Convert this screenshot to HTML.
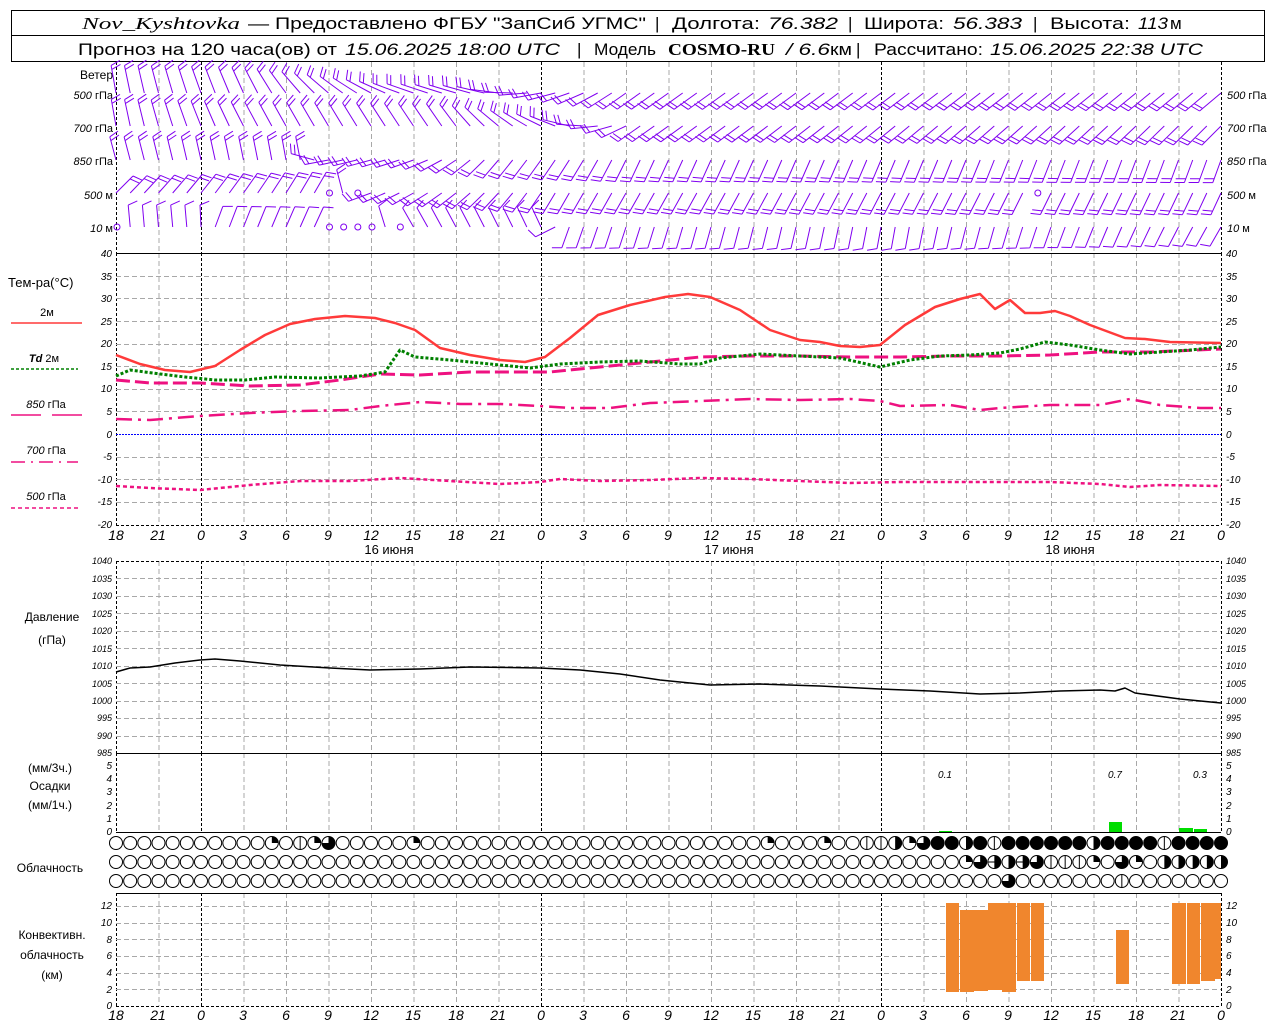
<!DOCTYPE html>
<html><head><meta charset="utf-8">
<style>
html,body{margin:0;padding:0;background:#fff;}
svg{display:block;font-family:"Liberation Sans",sans-serif;}
.it{font-style:italic;}
.lab{font-size:12px;fill:#000;}
.sc{font-size:10px;font-style:italic;fill:#000;}
.ax{font-size:14px;font-style:italic;fill:#000;}
</style></head>
<body>
<svg id="s" width="1280" height="1024" viewBox="0 0 1280 1024" xmlns="http://www.w3.org/2000/svg">
<rect width="1280" height="1024" fill="#fff"/>
<!-- header -->
<rect x="11.5" y="10.5" width="1253" height="25" fill="none" stroke="#000"/>
<rect x="11.5" y="35.5" width="1253" height="26" fill="none" stroke="#000"/>
<g font-size="17" fill="#000">
<text x="82" y="29" font-family="Liberation Serif,serif" font-style="italic" textLength="158" lengthAdjust="spacingAndGlyphs">Nov_Kyshtovka</text>
<text x="248" y="29" textLength="398" lengthAdjust="spacingAndGlyphs">— Предоставлено ФГБУ "ЗапСиб УГМС"</text>
<text x="655" y="29">|</text>
<text x="672" y="29" textLength="88" lengthAdjust="spacingAndGlyphs">Долгота:</text>
<text x="768" y="29" class="it" textLength="70" lengthAdjust="spacingAndGlyphs">76.382</text>
<text x="848" y="29">|</text>
<text x="864" y="29" textLength="80" lengthAdjust="spacingAndGlyphs">Широта:</text>
<text x="953" y="29" class="it" textLength="69" lengthAdjust="spacingAndGlyphs">56.383</text>
<text x="1033" y="29">|</text>
<text x="1050" y="29" textLength="80" lengthAdjust="spacingAndGlyphs">Высота:</text>
<text x="1138" y="29" class="it" textLength="30" lengthAdjust="spacingAndGlyphs">113</text>
<text x="1170" y="29">м</text>
<text x="78" y="55" textLength="259" lengthAdjust="spacingAndGlyphs">Прогноз на 120 часа(ов) от</text>
<text x="345" y="55" class="it" textLength="215" lengthAdjust="spacingAndGlyphs">15.06.2025 18:00 UTC</text>
<text x="577" y="55">|</text>
<text x="594" y="55" textLength="62" lengthAdjust="spacingAndGlyphs">Модель</text>
<text x="668" y="55" font-family="Liberation Serif,serif" font-weight="bold" textLength="107" lengthAdjust="spacingAndGlyphs">COSMO-RU</text>
<text x="786" y="55" class="it" textLength="44" lengthAdjust="spacingAndGlyphs">/ 6.6</text>
<text x="830" y="55" textLength="22" lengthAdjust="spacingAndGlyphs">км</text>
<text x="856" y="55">|</text>
<text x="874" y="55" textLength="109" lengthAdjust="spacingAndGlyphs">Рассчитано:</text>
<text x="990" y="55" class="it" textLength="213" lengthAdjust="spacingAndGlyphs">15.06.2025 22:38 UTC</text>
</g>
<g id="grid"></g>
<!-- panel borders -->
<g stroke="#000" stroke-width="1">
<line x1="116" y1="253.5" x2="1221" y2="253.5"/>
<line x1="116" y1="525.5" x2="1221" y2="525.5" stroke-dasharray="3,2"/>
<line x1="116" y1="561.5" x2="1221" y2="561.5" stroke-dasharray="3,2"/>
<line x1="116" y1="753.5" x2="1221" y2="753.5"/>
<line x1="116" y1="832.5" x2="1221" y2="832.5"/>
<line x1="116" y1="893.5" x2="1221" y2="893.5"/>
<line x1="116" y1="1006.5" x2="1221" y2="1006.5" stroke-dasharray="3,2"/>
</g>
<line x1="116" y1="434.5" x2="1221" y2="434.5" stroke="#0000ff" stroke-dasharray="2,1"/>
<!-- left labels -->
<g class="lab">
<text x="113" y="79" text-anchor="end">Ветер</text>
<text x="113" y="99" text-anchor="end" font-size="11"><tspan class="it">500</tspan> гПа</text>
<text x="113" y="132" text-anchor="end" font-size="11"><tspan class="it">700</tspan> гПа</text>
<text x="113" y="165" text-anchor="end" font-size="11"><tspan class="it">850</tspan> гПа</text>
<text x="113" y="199" text-anchor="end" font-size="11"><tspan class="it">500</tspan> м</text>
<text x="113" y="232" text-anchor="end" font-size="11"><tspan class="it">10</tspan>   м</text>
<text x="1227" y="99" font-size="11"><tspan class="it">500</tspan> гПа</text>
<text x="1227" y="132" font-size="11"><tspan class="it">700</tspan> гПа</text>
<text x="1227" y="165" font-size="11"><tspan class="it">850</tspan> гПа</text>
<text x="1227" y="199" font-size="11"><tspan class="it">500</tspan> м</text>
<text x="1227" y="232" font-size="11"><tspan class="it">10</tspan>   м</text>
<text x="8" y="287" font-size="13">Тем-ра(°C)</text>
<text x="47" y="316" text-anchor="middle" font-size="11">2м</text>
<text x="44" y="362" text-anchor="middle" font-size="11"><tspan class="it" font-weight="bold">Td</tspan>  2м</text>
<text x="46" y="408" text-anchor="middle" font-size="11"><tspan class="it">850</tspan> гПа</text>
<text x="46" y="454" text-anchor="middle" font-size="11"><tspan class="it">700</tspan> гПа</text>
<text x="46" y="500" text-anchor="middle" font-size="11"><tspan class="it">500</tspan> гПа</text>
<text x="52" y="621" text-anchor="middle">Давление</text>
<text x="52" y="644" text-anchor="middle">(гПа)</text>
<text x="50" y="772" text-anchor="middle">(мм/3ч.)</text>
<text x="50" y="790" text-anchor="middle">Осадки</text>
<text x="50" y="809" text-anchor="middle">(мм/1ч.)</text>
<text x="50" y="872" text-anchor="middle">Облачность</text>
<text x="52" y="939" text-anchor="middle">Конвективн.</text>
<text x="52" y="959" text-anchor="middle">облачность</text>
<text x="52" y="979" text-anchor="middle">(км)</text>
</g>
<g stroke-width="1.5">
<line x1="11" y1="323" x2="82" y2="323" stroke="#ff3a3a"/>
<line x1="11" y1="369" x2="78" y2="369" stroke="#008000" stroke-dasharray="3,2"/>
<line x1="11" y1="415" x2="41" y2="415" stroke="#ee1180"/><line x1="52" y1="415" x2="82" y2="415" stroke="#ee1180"/>
<line x1="11" y1="462" x2="78" y2="462" stroke="#ee1180" stroke-dasharray="14,6,2,6"/>
<line x1="11" y1="508" x2="78" y2="508" stroke="#ee1180" stroke-dasharray="4,3"/>
</g>
<!-- temp scale -->
<g class="sc" text-anchor="end">
<text x="112" y="257">40</text><text x="112" y="280">35</text><text x="112" y="302">30</text><text x="112" y="325">25</text><text x="112" y="347">20</text><text x="112" y="370">15</text><text x="112" y="392">10</text><text x="112" y="415">5</text><text x="112" y="438">0</text><text x="112" y="460">-5</text><text x="112" y="483">-10</text><text x="112" y="505">-15</text><text x="112" y="528">-20</text>
<text x="112" y="564" font-size="9">1040</text><text x="112" y="582" font-size="9">1035</text><text x="112" y="599" font-size="9">1030</text><text x="112" y="617" font-size="9">1025</text><text x="112" y="634" font-size="9">1020</text><text x="112" y="652" font-size="9">1015</text><text x="112" y="669" font-size="9">1010</text><text x="112" y="687" font-size="9">1005</text><text x="112" y="704" font-size="9">1000</text><text x="112" y="721" font-size="9">995</text><text x="112" y="739" font-size="9">990</text><text x="112" y="756" font-size="9">985</text>
<text x="112" y="769">5</text><text x="112" y="782">4</text><text x="112" y="795">3</text><text x="112" y="809">2</text><text x="112" y="822">1</text><text x="112" y="835">0</text>
<text x="112" y="909">12</text><text x="112" y="926">10</text><text x="112" y="943">8</text><text x="112" y="959">6</text><text x="112" y="976">4</text><text x="112" y="993">2</text><text x="112" y="1009">0</text>
</g>
<g class="sc">
<text x="1226" y="257">40</text><text x="1226" y="280">35</text><text x="1226" y="302">30</text><text x="1226" y="325">25</text><text x="1226" y="347">20</text><text x="1226" y="370">15</text><text x="1226" y="392">10</text><text x="1226" y="415">5</text><text x="1226" y="438">0</text><text x="1226" y="460">-5</text><text x="1226" y="483">-10</text><text x="1226" y="505">-15</text><text x="1226" y="528">-20</text>
<text x="1226" y="564" font-size="9">1040</text><text x="1226" y="582" font-size="9">1035</text><text x="1226" y="599" font-size="9">1030</text><text x="1226" y="617" font-size="9">1025</text><text x="1226" y="634" font-size="9">1020</text><text x="1226" y="652" font-size="9">1015</text><text x="1226" y="669" font-size="9">1010</text><text x="1226" y="687" font-size="9">1005</text><text x="1226" y="704" font-size="9">1000</text><text x="1226" y="721" font-size="9">995</text><text x="1226" y="739" font-size="9">990</text><text x="1226" y="756" font-size="9">985</text>
<text x="1226" y="769">5</text><text x="1226" y="782">4</text><text x="1226" y="795">3</text><text x="1226" y="809">2</text><text x="1226" y="822">1</text><text x="1226" y="835">0</text>
<text x="1226" y="909">12</text><text x="1226" y="926">10</text><text x="1226" y="943">8</text><text x="1226" y="959">6</text><text x="1226" y="976">4</text><text x="1226" y="993">2</text><text x="1226" y="1009">0</text>
</g>
<!-- time axes -->
<g class="ax" text-anchor="middle">
<text x="116" y="540">18</text><text x="158" y="540">21</text><text x="201" y="540">0</text><text x="243" y="540">3</text><text x="286" y="540">6</text><text x="328" y="540">9</text><text x="371" y="540">12</text><text x="413" y="540">15</text><text x="456" y="540">18</text><text x="498" y="540">21</text><text x="541" y="540">0</text><text x="583" y="540">3</text><text x="626" y="540">6</text><text x="668" y="540">9</text><text x="711" y="540">12</text><text x="753" y="540">15</text><text x="796" y="540">18</text><text x="838" y="540">21</text><text x="881" y="540">0</text><text x="923" y="540">3</text><text x="966" y="540">6</text><text x="1008" y="540">9</text><text x="1051" y="540">12</text><text x="1093" y="540">15</text><text x="1136" y="540">18</text><text x="1178" y="540">21</text><text x="1221" y="540">0</text>
<text x="116" y="1020">18</text><text x="158" y="1020">21</text><text x="201" y="1020">0</text><text x="243" y="1020">3</text><text x="286" y="1020">6</text><text x="328" y="1020">9</text><text x="371" y="1020">12</text><text x="413" y="1020">15</text><text x="456" y="1020">18</text><text x="498" y="1020">21</text><text x="541" y="1020">0</text><text x="583" y="1020">3</text><text x="626" y="1020">6</text><text x="668" y="1020">9</text><text x="711" y="1020">12</text><text x="753" y="1020">15</text><text x="796" y="1020">18</text><text x="838" y="1020">21</text><text x="881" y="1020">0</text><text x="923" y="1020">3</text><text x="966" y="1020">6</text><text x="1008" y="1020">9</text><text x="1051" y="1020">12</text><text x="1093" y="1020">15</text><text x="1136" y="1020">18</text><text x="1178" y="1020">21</text><text x="1221" y="1020">0</text>
</g>
<g font-size="13" text-anchor="middle" fill="#000">
<text x="389" y="554">16 июня</text><text x="729" y="554">17 июня</text><text x="1070" y="554">18 июня</text>
</g>
<!-- temperature curves -->
<g fill="none" stroke-linejoin="round">
<polyline stroke="#ee1180" stroke-width="2.5" stroke-dasharray="4,3" points="116,486 150,488 200,490 250,485 300,481 350,481 400,478 450,481 500,484 540,482 560,479 600,481 650,480 700,478 750,479 800,481 850,483 900,482 950,482 1000,482 1050,482 1100,484 1130,487 1160,485 1221,486"/>
<polyline stroke="#ee1180" stroke-width="2.5" stroke-dasharray="16,6,3,6" points="116,419 150,420 200,416 250,413 300,411 350,410 380,406 420,402 460,404 500,404 540,406 570,408 610,408 650,403 700,401 750,399 800,400 850,399 880,401 900,406 950,405 980,410 1000,408 1050,405 1100,405 1130,399 1160,405 1200,408 1221,408"/>
<polyline stroke="#ee1180" stroke-width="3" stroke-dasharray="14,5" points="116,380 150,383 200,383 250,386 300,385 340,380 380,374 420,375 470,372 510,372 550,372 600,367 650,362 700,357 750,356 800,356 850,357 900,357 950,356 1000,356 1050,355 1100,352 1150,352 1221,349"/>
<polyline stroke="#008000" stroke-width="3" stroke-dasharray="3,2" points="116,376 130,370 160,374 185,377 215,380 245,380 275,377 320,378 360,376 385,372 400,350 415,357 450,360 490,364 530,368 560,364 600,362 640,361 680,364 700,364 720,358 760,354 800,356 840,358 880,367 910,360 940,356 970,355 1000,353 1020,349 1045,342 1070,345 1100,350 1130,354 1160,352 1190,350 1221,347"/>
<polyline stroke="#ff3a3a" stroke-width="2.5" points="116,355 140,364 165,370 190,372 215,366 240,350 265,335 290,324 315,319 345,316 375,318 395,323 415,330 440,348 470,355 500,360 525,362 545,357 570,338 598,315 630,305 665,297 688,294 710,297 740,310 770,330 800,340 820,342 840,346 860,347 880,345 905,325 935,307 960,299 980,294 995,309 1010,300 1025,313 1040,313 1055,311 1070,316 1090,325 1125,338 1145,339 1170,342 1221,343"/>
<polyline stroke="#000" stroke-width="1.5" points="116,672 130,668 150,667 175,663 200,660 215,659 240,661 280,665 330,668 370,670 420,669 470,667 540,668 580,670 620,674 660,680 710,685 760,684 820,686 880,689 930,691 980,694 1020,693 1060,691 1100,690 1115,691 1125,688 1135,693 1180,699 1221,703"/>
</g>
<!-- precipitation -->
<g fill="#00dd00">
<rect x="939" y="831" width="13" height="1"/><rect x="1109" y="822" width="13" height="10"/><rect x="1179" y="828" width="14" height="4"/><rect x="1194" y="829" width="13" height="3"/>
</g>
<g class="sc" font-size="12" text-anchor="middle"><text x="945" y="778">0.1</text><text x="1115" y="778">0.7</text><text x="1200" y="778">0.3</text></g>
<!-- convective -->
<g fill="#f0862d">
<rect x="946" y="903" width="13" height="89"/><rect x="960" y="910" width="14" height="82"/><rect x="974" y="910" width="14" height="81"/><rect x="988" y="903" width="14" height="87"/><rect x="1002" y="903" width="14" height="89"/><rect x="1017" y="903" width="13" height="78"/><rect x="1031" y="903" width="13" height="78"/><rect x="1116" y="930" width="13" height="54"/><rect x="1172" y="903" width="14" height="81"/><rect x="1187" y="903" width="13" height="81"/><rect x="1201" y="903" width="14" height="78"/><rect x="1215" y="903" width="6" height="76"/>
</g>
<g id="clouds"></g>
<g id="wind" stroke="#8000f0" stroke-width="1" fill="none"></g>
</svg>
<script>
(function(){
var NS="http://www.w3.org/2000/svg";
function el(p,t,a){var e=document.createElementNS(NS,t);for(var k in a)e.setAttribute(k,a[k]);p.appendChild(e);return e;}
var g=document.getElementById('grid');
var panels=[[62,253],[253,525],[561,753],[753,832],[893,1006]];
for(var k=0;k<=26;k++){var x=116+k*42.5+0.5;var dark=(k==0||k==2||k==10||k==18||k==26);
 panels.forEach(function(p){el(g,'line',{x1:x,y1:p[0],x2:x,y2:p[1],stroke:dark?'#000':'#a8a8a8','stroke-dasharray':dark?'3,2':'5,3'});});}
for(var t=35;t>=-15;t-=5){if(t==0)continue;var y=Math.round(434-t*4.517)+0.5;el(g,'line',{x1:116,y1:y,x2:1221,y2:y,stroke:'#a8a8a8','stroke-dasharray':'5,3'});}
for(var p=1035;p>985;p-=5){var y=Math.round(561+(1040-p)*3.49)+0.5;el(g,'line',{x1:116,y1:y,x2:1221,y2:y,stroke:'#a8a8a8','stroke-dasharray':'5,3'});}
for(var c=2;c<=12;c+=2){var y=Math.round(1006-c*8.33)+0.5;el(g,'line',{x1:116,y1:y,x2:1221,y2:y,stroke:'#a8a8a8','stroke-dasharray':'5,3'});}
// clouds
var cg=document.getElementById('clouds');
var rows=[{y:843,m:{11:'q',13:'l',14:'q',15:'t',21:'q',46:'q',50:'q',53:'l',54:'l',55:'h',56:'q',57:'t',60:'h',62:'l',69:'h',74:'l'},full:[58,59,61,63,64,65,66,67,68,70,71,72,73,75,76,77,78]},
{y:862,m:{60:'q',61:'t',62:'e',63:'h',64:'e',65:'t',66:'l',67:'l',68:'l',69:'q',71:'t',72:'q',74:'h',75:'h',76:'h',77:'h',78:'h'},full:[]},
{y:881,m:{63:'t',71:'l'},full:[]}];
var r=6.5;
rows.forEach(function(R){R.full.forEach(function(i){R.m[i]='f';});
 for(var i=0;i<=78;i++){var cx=116+i*14.1667,cy=R.y,t=R.m[i];
  if(t=='f'){el(cg,'circle',{cx:cx,cy:cy,r:r,fill:'#000',stroke:'#000'});continue;}
  el(cg,'circle',{cx:cx,cy:cy,r:r,fill:'#fff',stroke:'#000'});
  if(t=='q')el(cg,'path',{d:'M'+cx+' '+cy+'V'+(cy-r)+'A'+r+' '+r+' 0 0 1 '+(cx+r)+' '+cy+'Z',fill:'#000'});
  if(t=='h')el(cg,'path',{d:'M'+cx+' '+(cy-r)+'A'+r+' '+r+' 0 0 1 '+cx+' '+(cy+r)+'Z',fill:'#000'});
  if(t=='t')el(cg,'path',{d:'M'+cx+' '+cy+'V'+(cy-r)+'A'+r+' '+r+' 0 1 1 '+(cx-r)+' '+cy+'Z',fill:'#000'});
  if(t=='e'){el(cg,'path',{d:'M'+cx+' '+(cy-r)+'A'+r+' '+r+' 0 0 1 '+cx+' '+(cy+r)+'Z',fill:'#000'});el(cg,'line',{x1:cx-r,y1:cy,x2:cx+r,y2:cy,stroke:'#000'});}
  if(t=='l')el(cg,'line',{x1:cx,y1:cy-r,x2:cx,y2:cy+r,stroke:'#000'});
 }});
// wind
var wg=document.getElementById('wind');
function ip(keys,x){if(x<=keys[0][0])return keys[0][1];for(var j=1;j<keys.length;j++){if(x<=keys[j][0]){var a=keys[j-1],b=keys[j];return a[1]+(b[1]-a[1])*(x-a[0])/(b[0]-a[0]);}}return keys[keys.length-1][1];}
var W=[
{y:93,L:28,n:2,k:[[116,100],[250,115],[330,140],[400,160],[480,165],[540,190],[620,215],[1221,220]],calm:[]},
{y:126,L:27,n:2,k:[[116,100],[250,118],[450,125],[560,160],[640,215],[1221,225]],calm:[]},
{y:160,L:24,n:2,k:[[116,105],[300,100],[320,190],[420,200],[500,230],[640,245],[1221,250]],calm:[]},
{y:193,L:24,n:2,k:[[116,45],[310,60],[330,60],[370,200],[560,240],[1221,245]],calm:[15,17,65]},
{y:227,L:22,n:1,k:[[116,95],[200,95],[210,70],[320,65],[405,120],[545,115],[560,250],[900,260],[1221,240]],calm:[0,15,16,17,18,20]}];
W.forEach(function(R){for(var i=0;i<=78;i++){var x=116+i*14.1667;
 if(R.calm.indexOf(i)>=0){el(wg,'circle',{cx:x+1,cy:R.y,r:3});continue;}
 var a=ip(R.k,x)*Math.PI/180,dx=Math.cos(a),dy=-Math.sin(a);
 var tx=x+dx*R.L,ty=R.y+dy*R.L;
 var d='M'+x.toFixed(1)+' '+R.y+'L'+tx.toFixed(1)+' '+ty.toFixed(1);
 var b=a-70*Math.PI/180,bx=Math.cos(b)*10,by=-Math.sin(b)*10;
 for(var j=0;j<R.n;j++){var px=tx-dx*j*4,py=ty-dy*j*4;d+='M'+px.toFixed(1)+' '+py.toFixed(1)+'l'+bx.toFixed(1)+' '+by.toFixed(1);}
 el(wg,'path',{d:d});}});
})();
</script>
</body></html>
